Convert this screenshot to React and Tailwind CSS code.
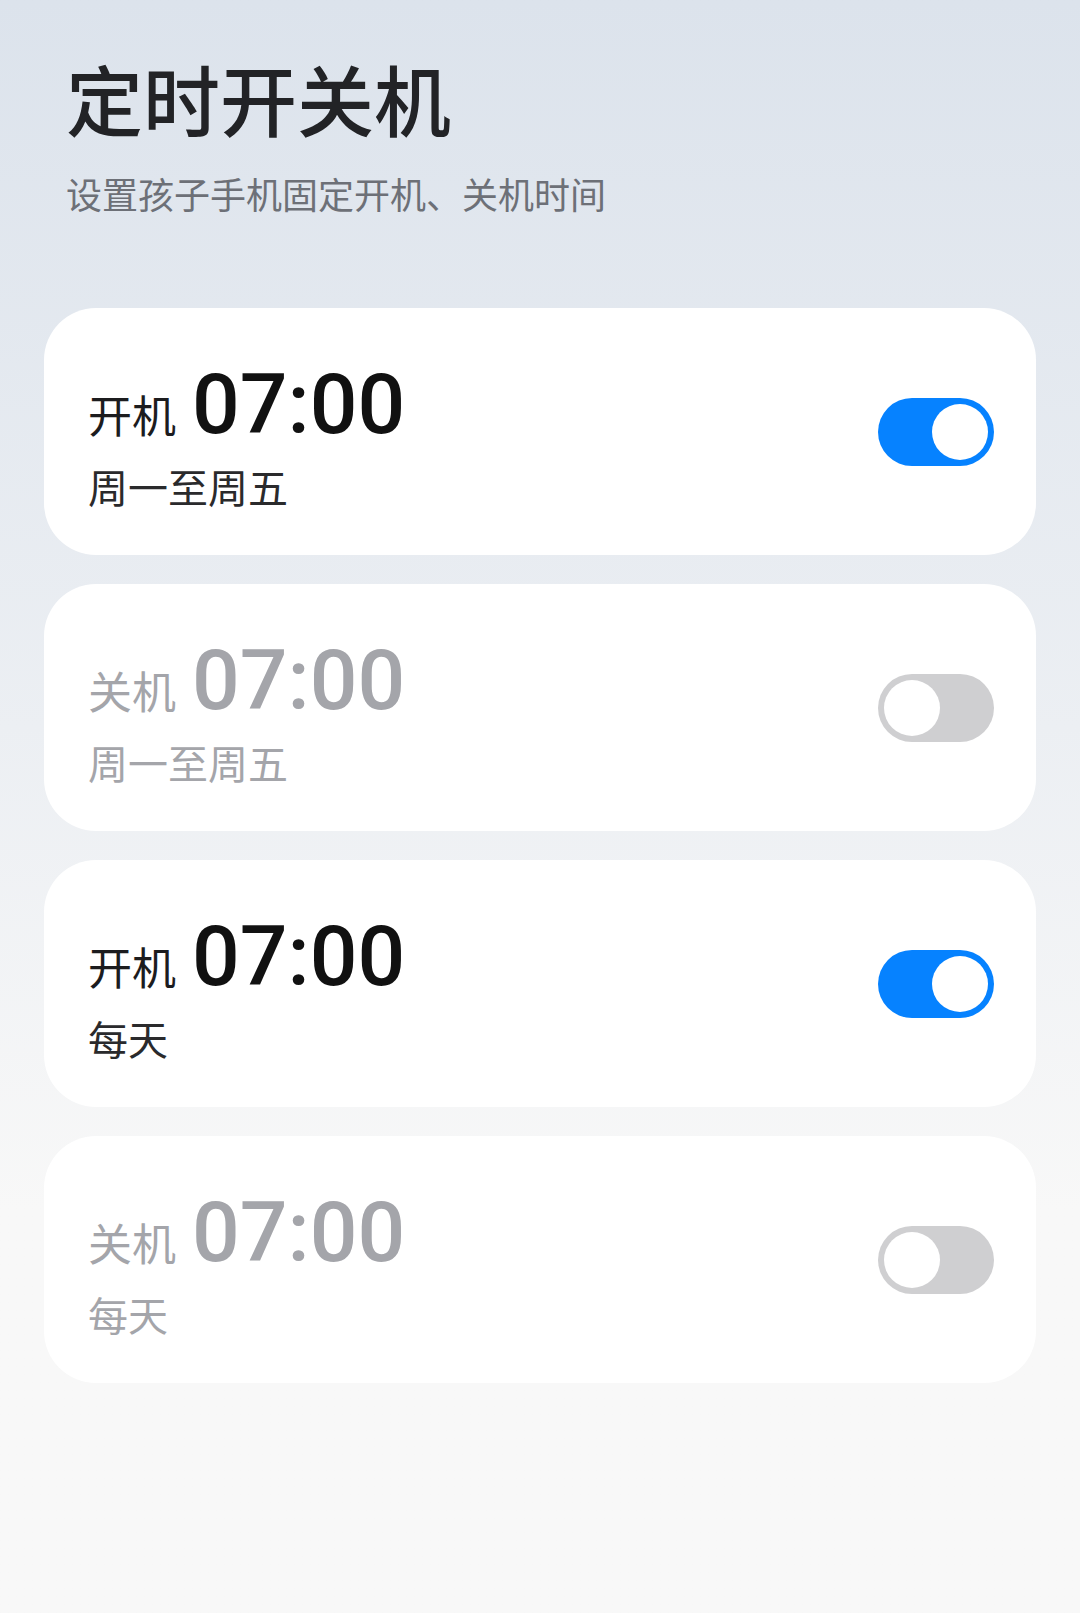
import { useState } from "react";

const cjk = "font-['Noto_Sans_CJK_SC',sans-serif]";

const initial = [
  { id: 1, label: "开机", time: "07:00", days: "周一至周五", on: true },
  { id: 2, label: "关机", time: "07:00", days: "周一至周五", on: false },
  { id: 3, label: "开机", time: "07:00", days: "每天", on: true },
  { id: 4, label: "关机", time: "07:00", days: "每天", on: false },
];

function Toggle({ on, onClick }) {
  return (
    <button
      onClick={onClick}
      className={
        "flex h-[68px] w-[116px] shrink-0 self-center items-center rounded-full px-[6px] " +
        (on ? "justify-end bg-[#0682ff]" : "justify-start bg-[#cfcfd1]")
      }
    >
      <span className="h-[56px] w-[56px] rounded-full bg-white" />
    </button>
  );
}

function ScheduleCard({ item, onToggle }) {
  const on = item.on;
  return (
    <div className="flex h-[247px] justify-between rounded-[52px] bg-white pl-[44px] pr-[42px]">
      <div className="flex flex-col pt-[55px]">
        <div className="flex items-baseline gap-[16px]">
          <span
            className={cjk + " text-[44px] leading-none " + (on ? "text-[#1c1c1e]" : "text-[#a4a5aa]")}
          >
            {item.label}
          </span>
          <span
            className={
              "font-['Roboto',sans-serif] text-[84px] font-medium leading-none " +
              (on ? "text-[#111111]" : "text-[#a4a5aa]")
            }
          >
            {item.time}
          </span>
        </div>
        <div
          className={cjk + " mt-[19px] text-[40px] leading-none " + (on ? "text-[#2a2a2c]" : "text-[#a4a5aa]")}
        >
          {item.days}
        </div>
      </div>
      <Toggle on={on} onClick={onToggle} />
    </div>
  );
}

export default function App() {
  const [items, setItems] = useState(initial);

  function toggle(id) {
    setItems(items.map((it) => (it.id === id ? { ...it, on: !it.on } : it)));
  }

  return (
    <div className="min-h-[1613px] w-full bg-linear-to-b from-[#dce3ec] from-0% via-[#eceff3] via-45% to-[#f8f8f8] to-75%">
      <div className="px-[66px] pt-[59px]">
        <h1 className={cjk + " text-[77px] font-medium leading-none text-[#222326]"}>定时开关机</h1>
        <p className={cjk + " mt-[39px] text-[36px] leading-none text-[#6d7077]"}>
          设置孩子手机固定开机、关机时间
        </p>
      </div>
      <div className="mx-[44px] mt-[97px] flex flex-col gap-[29px]">
        {items.map((it) => (
          <ScheduleCard key={it.id} item={it} onToggle={() => toggle(it.id)} />
        ))}
      </div>
    </div>
  );
}
